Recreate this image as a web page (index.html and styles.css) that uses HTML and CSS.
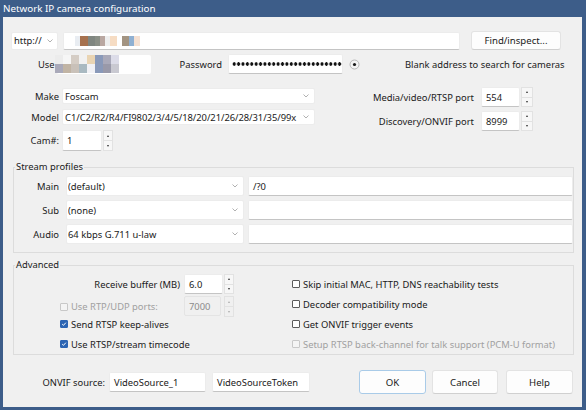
FILE: index.html
```html
<!DOCTYPE html>
<html>
<head>
<meta charset="utf-8">
<link rel="stylesheet" href="styles.css">
</head>
<body>
<div class="window">
  <div class="titlebar">Network IP camera configuration</div>
  <div class="dlg">
    <div class="row r1">
      <div class="combo http"><span class="ctext">http://</span><svg class="chev" viewBox="0 0 6 4"><polyline points="0.5,0.5 3,3 5.5,0.5"/></svg></div>
      <div class="field url">
        <div class="mosaic m-url">
          <span class="u1"></span><span class="u2"></span><span class="u3"></span><span class="u4"></span><span class="u5"></span><span class="u6"></span><span class="u7"></span><span class="u8"></span><span class="u9"></span><span class="u10"></span><span class="u11"></span>
        </div>
      </div>
      <button class="btn find">Find/inspect...</button>
    </div>

    <div class="row r2">
      <span class="lbl-use">Use</span>
      <div class="field user">
        <div class="mosaic m-user">
          <span class="a1"></span><span class="a2"></span><span class="a3"></span><span class="a4"></span><span class="a5"></span><span class="a6"></span><span class="a7"></span><span class="a8"></span>
          <span class="b1"></span><span class="b2"></span><span class="b3"></span><span class="b4"></span><span class="b5"></span><span class="b6"></span><span class="b7"></span><span class="b8"></span>
        </div>
      </div>
      <span class="lbl-pass">Password</span>
      <div class="field pass"><div class="dots"></div></div>
      <svg class="eye" viewBox="0 0 11 11"><circle cx="5.5" cy="5.5" r="4.5" class="eye-ring"/><circle cx="5.5" cy="5.5" r="1.6" class="eye-dot"/></svg>
      <span class="hint">Blank address to search for cameras</span>
    </div>

    <div class="sec-make">
      <div class="make-grid">
        <span class="rlbl">Make</span>
        <div class="combo"><span class="ctext">Foscam</span><svg class="chev" viewBox="0 0 6 4"><polyline points="0.5,0.5 3,3 5.5,0.5"/></svg></div>
        <span class="rlbl">Model</span>
        <div class="combo"><span class="ctext model">C1/C2/R2/R4/FI9802/3/4/5/18/20/21/26/28/31/35/99x</span><svg class="chev" viewBox="0 0 6 4"><polyline points="0.5,0.5 3,3 5.5,0.5"/></svg></div>
        <span class="rlbl">Cam#:</span>
        <div class="numbox cam">
          <div class="field num">1</div>
          <div class="spin"><span class="sb up"></span><span class="sb dn"></span></div>
        </div>
      </div>
      <div class="ports">
        <div class="prow">
          <span class="plbl">Media/video/RTSP port</span>
          <div class="numbox">
            <div class="field pnum">554</div>
            <div class="spin wide"><span class="sb up"></span><span class="sb dn"></span></div>
          </div>
        </div>
        <div class="prow">
          <span class="plbl">Discovery/ONVIF port</span>
          <div class="numbox">
            <div class="field pnum">8999</div>
            <div class="spin wide"><span class="sb up"></span><span class="sb dn"></span></div>
          </div>
        </div>
      </div>
    </div>

    <fieldset class="group streams">
      <legend>Stream profiles</legend>
      <div class="stream-grid">
        <span class="rlbl">Main</span>
        <div class="combo"><span class="ctext">(default)</span><svg class="chev" viewBox="0 0 6 4"><polyline points="0.5,0.5 3,3 5.5,0.5"/></svg></div>
        <div class="field line">/?0</div>
        <span class="rlbl">Sub</span>
        <div class="combo"><span class="ctext">(none)</span><svg class="chev" viewBox="0 0 6 4"><polyline points="0.5,0.5 3,3 5.5,0.5"/></svg></div>
        <div class="field line"></div>
        <span class="rlbl">Audio</span>
        <div class="combo"><span class="ctext">64 kbps G.711 u-law</span><svg class="chev" viewBox="0 0 6 4"><polyline points="0.5,0.5 3,3 5.5,0.5"/></svg></div>
        <div class="field line"></div>
      </div>
    </fieldset>

    <fieldset class="group adv">
      <legend>Advanced</legend>
      <div class="adv-cols">
        <div class="adv-left">
          <div class="arow ra">
            <span class="albl">Receive buffer (MB)</span>
            <div class="numbox">
              <div class="field anum">6.0</div>
              <div class="spin"><span class="sb up"></span><span class="sb dn"></span></div>
            </div>
          </div>
          <div class="arow rb">
            <label class="chk disabled"><span class="cb"></span>Use RTP/UDP ports:</label>
            <div class="numbox">
              <div class="field anum off">7000</div>
              <div class="spin off"><span class="sb up"></span><span class="sb dn"></span></div>
            </div>
          </div>
          <div class="arow rc">
            <label class="chk"><span class="cb on"><svg viewBox="0 0 8 8"><polyline points="1.6,4.2 3.3,5.8 6.4,2.3"/></svg></span>Send RTSP keep-alives</label>
          </div>
          <div class="arow rd">
            <label class="chk"><span class="cb on"><svg viewBox="0 0 8 8"><polyline points="1.6,4.2 3.3,5.8 6.4,2.3"/></svg></span>Use RTSP/stream timecode</label>
          </div>
        </div>
        <div class="adv-right">
          <label class="chk"><span class="cb"></span>Skip initial MAC, HTTP, DNS reachability tests</label>
          <label class="chk"><span class="cb"></span>Decoder compatibility mode</label>
          <label class="chk"><span class="cb"></span>Get ONVIF trigger events</label>
          <label class="chk disabled"><span class="cb"></span>Setup RTSP back-channel for talk support (PCM-U format)</label>
        </div>
      </div>
    </fieldset>

    <div class="row bottom">
      <span class="olbl">ONVIF source:</span>
      <div class="field src1">VideoSource_1</div>
      <div class="field src2">VideoSourceToken</div>
      <button class="btn ok">OK</button>
      <button class="btn cancel">Cancel</button>
      <button class="btn help">Help</button>
    </div>
  </div>
</div>
</body>
</html>
```

FILE: styles.css
```css
* { box-sizing: border-box; }
html, body { margin: 0; padding: 0; }
body {
  background: #3d5d89;
  font-family: "Noto Sans", "Open Sans", sans-serif;
  font-size: 9.4px;
  color: #1a1a1a;
}
.window {
  width: 586px;
  height: 410px;
  display: flex;
  flex-direction: column;
  background: #3d5d89;
}
.titlebar {
  height: 17px;
  line-height: 17px;
  padding-left: 3px;
  color: #ffffff;
  font-size: 9.8px;
}
.dlg {
  flex: 1;
  margin: 0 4px 3px 3px;
  background: #f0f0f0;
}
.row { display: flex; align-items: center; }

/* generic controls */
.field {
  background: #ffffff;
  border: 1px solid #ececec;
  border-bottom-color: #c4c4c4;
  border-radius: 2px;
  display: flex;
  align-items: center;
  padding-left: 4px;
  overflow: hidden;
  white-space: nowrap;
}
.combo {
  background: #ffffff;
  border: 1px solid #ececec;
  border-radius: 2px;
  display: flex;
  align-items: center;
  padding-left: 2px;
  padding-right: 5px;
  overflow: hidden;
  white-space: nowrap;
}
.ctext { flex: 1; overflow: hidden; }
.chev { width: 6px; height: 4px; flex: none; margin-left: 4px; }
.chev polyline { fill: none; stroke: #a8a8a8; stroke-width: 0.9; }
.btn {
  font-family: inherit;
  font-size: 9.6px;
  color: #1a1a1a;
  background: #fdfdfd;
  border: 1px solid #e3e3e3;
  border-bottom-color: #d0d0d0;
  border-radius: 3px;
  padding: 0;
}

/* row 1 */
.r1 { margin-top: 14px; padding-left: 8px; height: 19px; }
.http { width: 47px; height: 18px; padding-left: 2px; padding-right: 4px; }
.http .ctext { overflow: visible; flex: none; }
.http .chev { margin-left: auto; }
.url { width: 397px; height: 18px; margin-left: 5px; padding-left: 0; }
.find { width: 90px; height: 19px; margin-left: 11px; }

.mosaic { display: grid; }
.m-url {
  margin-left: 11px;
  grid-template-columns: 5px 8px 7px 5px 5px 5px 7px 5px 7px 5px 6px;
  grid-template-rows: 10px;
}
.m-url span:nth-child(1) { background: #e9edf2; }
.m-url span:nth-child(2) { background: #a6714e; }
.m-url span:nth-child(3) { background: #7f8680; }
.m-url span:nth-child(4) { background: #8a8f86; }
.m-url span:nth-child(5) { background: #b9a7a1; }
.m-url span:nth-child(6) { background: #eeeeee; }
.m-url span:nth-child(7) { background: #f6dcc3; }
.m-url span:nth-child(8) { background: #ffffff; }
.m-url span:nth-child(9) { background: #a39482; }
.m-url span:nth-child(10) { background: #8fb0d2; }
.m-url span:nth-child(11) { background: #f4e0d2; }

/* row 2 */
.r2 { margin-top: 4px; padding-left: 32px; height: 20px; }
.lbl-use { width: 22px; padding-left: 3px; }
.user { width: 94px; height: 19px; padding: 0; border: none; align-items: flex-start; overflow: visible; }
.m-user {
  margin-left: -2px;
  grid-template-columns: repeat(8, 8px);
  grid-template-rows: 9px 9px;
}
.m-user .a1 { background: #ececec; } .m-user .a2 { background: #f6f6f6; }
.m-user .a3 { background: #d5cdc5; } .m-user .a4 { background: #f1f1f1; }
.m-user .a5 { background: #e9d4b3; } .m-user .a6 { background: #8999b9; }
.m-user .a7 { background: #a9a9b9; } .m-user .a8 { background: #dcdce8; }
.m-user .b1 { background: #a9a9b9; } .m-user .b2 { background: #c1b4a4; }
.m-user .b3 { background: #c9c1b9; } .m-user .b4 { background: #a9b9c1; }
.m-user .b5 { background: #f1f1f5; } .m-user .b6 { background: #8999b9; }
.m-user .b7 { background: #9999a9; } .m-user .b8 { background: #c9c9d1; }
.lbl-pass { width: 77px; text-align: right; padding-right: 6px; }
.pass { width: 115px; height: 20px; padding-left: 3px; }
.dots {
  width: 112px;
  flex: none;
  height: 6px;
  background-image: radial-gradient(circle, #111 1.5px, transparent 1.9px);
  background-size: 4.4px 6px;
  background-repeat: repeat-x;
}
.eye { width: 11px; height: 11px; margin-left: 6px; }
.eye-ring { fill: #f4f4f4; stroke: #b0b0b0; stroke-width: 0.9; }
.eye-dot { fill: #1a1a1a; }
.hint { margin-left: 45px; white-space: nowrap; }

/* make section */
.sec-make { display: flex; margin-top: 13px; height: 64px; }
.make-grid {
  display: grid;
  grid-template-columns: 59px 253px;
  grid-template-rows: 16px 16px 21px;
  row-gap: 5px;
  margin-top: 1px;
  align-items: center;
  flex: none;
}
.rlbl { text-align: right; padding-right: 3px; }
.make-grid .combo { height: 16px; }
.model { letter-spacing: -0.05px; text-overflow: clip; }
.numbox { display: flex; align-items: stretch; height: 100%; }
.cam { height: 21px; }
.num { width: 40px; }
.spin { width: 10px; display: flex; flex-direction: column; margin-left: 1px; }
.spin.wide { width: 12px; }
.sb {
  flex: 1;
  background: #f7f7f7;
  border: 1px solid #e2e2e2;
  display: flex;
  align-items: center;
  justify-content: center;
}
.sb.up { border-bottom: none; }
.sb::after {
  content: "";
  width: 0; height: 0;
  border-left: 1.5px solid transparent;
  border-right: 1.5px solid transparent;
}
.sb.up::after { border-bottom: 2px solid #333; }
.sb.dn::after { border-top: 2px solid #333; }
.spin.off .sb::after { border-top-color: #aaa; border-bottom-color: #aaa; }
.spin.off .sb { background: #f0f0f0; }

.ports { display: flex; flex-direction: column; row-gap: 4px; margin-left: 3px; }
.prow { display: flex; align-items: center; height: 20px; }
.plbl { width: 163px; text-align: right; padding-right: 7px; }
.pnum { width: 39px; height: 20px; }

/* group boxes */
.group {
  margin: 0 0 0 10px;
  width: 561px;
  padding: 0;
  border: 1px solid #dcdcdc;
  border-radius: 0;
  min-inline-size: 0;
}
.group legend {
  padding: 0 1px;
  margin-left: 1px;
  line-height: 14px;
}
.streams { margin-top: 9px; padding-bottom: 8px; }
.stream-grid {
  display: grid;
  grid-template-columns: 48px 178px 325px;
  column-gap: 4px;
  grid-template-rows: 20px 20px 20px;
  row-gap: 4px;
  margin-top: 2px;
  align-items: center;
}
.stream-grid > * { height: 20px; }
.stream-grid .rlbl { display: flex; align-items: center; justify-content: flex-end; }
.stream-grid .combo { padding-left: 1px; }

.adv { margin-top: 5px; height: 97px; }
.adv-cols { display: flex; margin-top: 2px; }
.adv-left { width: 278px; flex: none; display: flex; flex-direction: column; }
.arow { display: flex; align-items: center; }
.ra { height: 20px; }
.rb { height: 21px; margin-top: 2px; }
.rc { height: 14px; }
.rd { height: 20px; margin-top: 3px; }
.albl { width: 170px; text-align: right; padding-right: 4px; }
.anum { width: 39px; height: 20px; }
.anum.off { background: #f0f0f0; border-color: #e4e4e4; color: #8c8c8c; width: 37px; margin-right: 2px; }
.rb .chk { width: 170px; }
.chk { display: flex; align-items: center; padding-left: 46px; white-space: nowrap; }
.chk.disabled { color: #a0a0a0; }
.cb {
  width: 8px; height: 8px;
  border: 1px solid #5c5c5c;
  border-radius: 1px;
  background: #ffffff;
  margin-right: 3px;
  flex: none;
  display: flex;
}
.chk.disabled .cb { border-color: #c8c8c8; background: #f4f4f4; }
.cb.on { background: #2d65b3; border-color: #2d65b3; }
.cb svg { width: 100%; height: 100%; }
.cb polyline { fill: none; stroke: #fff; stroke-width: 1.3; }
.adv-right { display: flex; flex-direction: column; }
.adv-right .chk { height: 20px; padding-left: 0; }

/* bottom */
.bottom { margin-top: 15px; height: 24px; }
.olbl { width: 106px; text-align: right; padding-right: 4px; }
.src1 { width: 97px; height: 20px; }
.src2 { width: 98px; height: 20px; margin-left: 6px; }
.ok { width: 67px; height: 24px; margin-left: 49px; border-color: #a9cbe8; }
.cancel { width: 66px; height: 24px; margin-left: 6px; }
.help { width: 67px; height: 24px; margin-left: 8px; }
```
